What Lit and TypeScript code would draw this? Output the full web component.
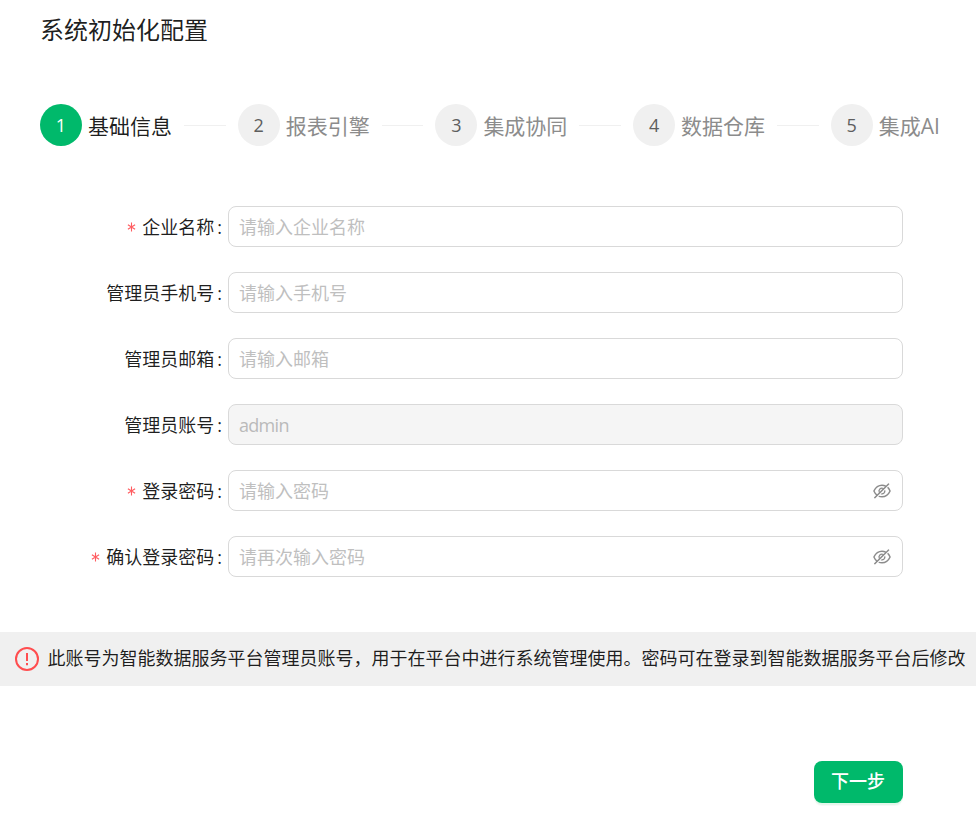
import { LitElement, html, css, nothing } from "lit";
import { customElement, property } from "lit/decorators.js";

const eyeInvisible = html`<svg class="eye" viewBox="64 64 896 896" aria-hidden="true"><path d="M942.2 486.2Q889.47 375.11 816.7 305l-50.88 50.88C807.31 395.53 843.45 447.4 874.7 512 791.5 684.2 673.4 766 512 766q-72.67 0-133.87-22.38L323 798.75Q408 838 512 838q288.3 0 430.2-300.3a60.29 60.29 0 000-51.5zm-63.57-320.64L836 122.88a8 8 0 00-11.32 0L715.31 232.2Q624.86 186 512 186q-288.3 0-430.2 300.3a60.3 60.3 0 000 51.5q56.69 119.4 136.5 191.41L112.48 835a8 8 0 000 11.31L155.17 889a8 8 0 0011.31 0l712.15-712.12a8 8 0 000-11.32zM149.3 512C232.6 339.8 350.7 258 512 258c54.54 0 104.13 9.36 149.12 28.39l-70.3 70.3a176 176 0 00-238.13 238.13l-83.42 83.42C223.1 637.49 183.3 582.28 149.3 512zm246.7 0a112.11 112.11 0 01146.2-106.69L401.31 546.2A112 112 0 01396 512z"/><path d="M508 624c-3.46 0-6.87-.16-10.25-.47l-52.82 52.82a176.09 176.09 0 00227.42-227.42l-52.82 52.82c.31 3.38.47 6.79.47 10.25a111.94 111.94 0 01-112 112z"/></svg>`;

const steps = ["基础信息", "报表引擎", "集成协同", "数据仓库", "集成AI"];

const fields = [
  { label: "企业名称", placeholder: "请输入企业名称", required: true },
  { label: "管理员手机号", placeholder: "请输入手机号" },
  { label: "管理员邮箱", placeholder: "请输入邮箱" },
  { label: "管理员账号", value: "admin", disabled: true },
  { label: "登录密码", placeholder: "请输入密码", required: true, secret: true },
  { label: "确认登录密码", placeholder: "请再次输入密码", required: true, secret: true },
];

@customElement("form-field")
class FormField extends LitElement {
  @property() label = "";
  @property() placeholder = "";
  @property() value = "";
  @property({ type: Boolean }) required = false;
  @property({ type: Boolean }) disabled = false;
  @property({ type: Boolean }) secret = false;

  static styles = css`
    :host { display: flex; height: 41px; align-items: center; }
    .label { width: 222px; flex: none; display: flex; justify-content: flex-end; align-items: center; color: rgba(0,0,0,.88); line-height: 40px; box-sizing: border-box; }
    .star { color: #ff5c60; margin-right: 6px; width: 9px; }
    .star svg { display: block; width: 9px; height: 10px; }
    .colon { margin: 0 0 0 3px; }
    .box { margin-left: 6px; width: 675px; height: 41px; box-sizing: border-box; border: 1px solid #d9d9d9; border-radius: 8px; display: flex; align-items: center; padding: 1px 11px 0 10px; background: #fff; }
    .box.off { background: #f5f5f5; }
    input { flex: 1; min-width: 0; border: 0; outline: 0; padding: 0; background: transparent; font: inherit; color: #b8b8b8; height: 36px; }
    .off input { font-family: "Open Sans", sans-serif; letter-spacing: -.7px; color: #bababa; }
    input::placeholder { color: #bfbfbf; opacity: 1; }
    .eye { width: 18px; height: 18px; fill: #8c8c8c; }
  `;

  render() {
    return html`<label class="label">
        ${this.required ? html`<span class="star"><svg viewBox="0 0 9 10" fill="none" stroke="currentColor" stroke-width="1.1"><path d="M4.5 .5v9M.9 2.7l7.2 4.6M8.1 2.7L.9 7.3"/></svg></span>` : nothing}
        <span>${this.label}</span><span class="colon">:</span>
      </label>
      <div class="box ${this.disabled ? "off" : ""}">
        <input type=${this.secret ? "password" : "text"} aria-label=${this.label} placeholder=${this.placeholder} .value=${this.value} ?disabled=${this.disabled} />
        ${this.secret ? eyeInvisible : nothing}
      </div>`;
  }
}

@customElement("app-root")
class AppRoot extends LitElement {
  static styles = css`
    :host { display: block; height: 814px; overflow: hidden; background: #fff; font-family: "Open Sans", "Noto Sans CJK SC", sans-serif; font-size: 18px; color: rgba(0,0,0,.88); }
    .title { margin: 0; padding: 12px 0 0 40px; font-size: 24px; line-height: 36px; font-weight: 400; }
    .steps { display: flex; margin: 56px 36px 0 40px; height: 42px; align-items: center; }
    .step { display: flex; align-items: center; flex: none; width: 197.7px; }
    .step:last-child { width: auto; }
    .num { width: 42px; height: 42px; border-radius: 50%; background: #f0f0f0; color: #5e5e5e; text-align: center; line-height: 43px; font-size: 18px; flex: none; }
    .name { margin-left: 6px; font-size: 21px; line-height: 42px; padding-top: 1px; color: #8c8c8c; white-space: nowrap; }
    .line { flex: 1; height: 1px; background: #f0f0f0; margin: 0 12px; }
    .active .num { background: #00b96b; color: #fff; }
    .active .name { color: rgba(0,0,0,.88); }
    .form { display: flex; flex-direction: column; gap: 25px; margin-top: 60px; }
    .notice { margin-top: 55px; height: 54px; background: #f0f0f0; display: flex; align-items: center; padding-left: 14px; white-space: nowrap; }
    .notice-text { padding-bottom: 4px; margin-left: -.5px; }
    .warn { width: 26px; height: 26px; flex: none; margin-right: 8px; }
    .actions { display: flex; justify-content: flex-end; padding: 75px 73px 0 0; }
    .next { width: 89px; height: 42px; border: 0; border-radius: 8px; background: #00b96b; color: #fff; font: inherit; font-weight: 500; box-shadow: 0 2px 0 rgba(5,255,105,.08), 0 3px 1px rgba(0,0,0,.03); padding: 0 1px 4px 0; }
  `;

  render() {
    return html`
      <h1 class="title">系统初始化配置</h1>
      <nav class="steps">
        ${steps.map((s, i) => html`<div class="step ${i === 0 ? "active" : ""}">
          <span class="num">${i + 1}</span><span class="name">${s}</span>
          ${i < steps.length - 1 ? html`<span class="line"></span>` : nothing}
        </div>`)}
      </nav>
      <div class="form">
        ${fields.map((f) => html`<form-field .label=${f.label} .placeholder=${f.placeholder ?? ""} .value=${f.value ?? ""} .required=${!!f.required} .disabled=${!!f.disabled} .secret=${!!f.secret}></form-field>`)}
      </div>
      <div class="notice">
        <svg class="warn" viewBox="0 0 26 26" fill="none" stroke="#ff4d4f" stroke-width="2"><circle cx="13" cy="13" r="11"/><path d="M13 7v8M13 17v2.2"/></svg>
        <span class="notice-text">此账号为智能数据服务平台管理员账号，用于在平台中进行系统管理使用。密码可在登录到智能数据服务平台后修改</span>
      </div>
      <div class="actions"><button class="next">下一步</button></div>
    `;
  }
}
